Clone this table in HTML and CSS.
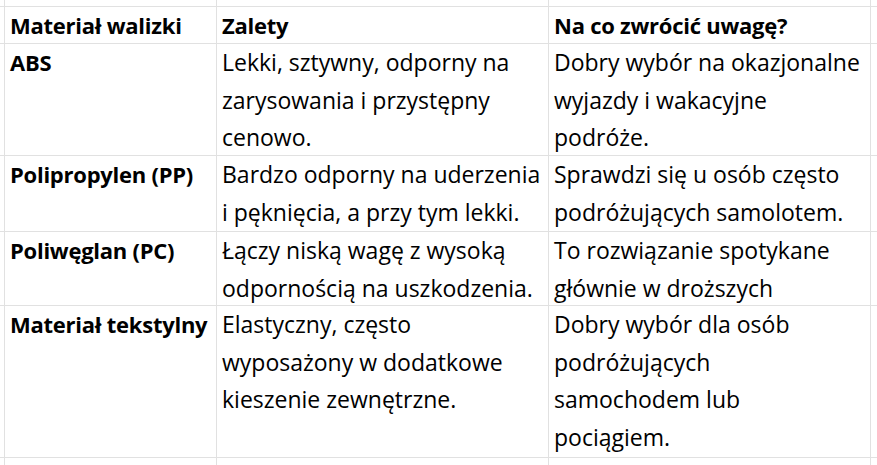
FILE: index.html
```html
<!DOCTYPE html>
<html lang="pl">
<head>
<meta charset="utf-8">
<title>Materiały walizek</title>
<link rel="stylesheet" href="styles.css">
</head>
<body>
<div class="sheet">
  <div class="gap"></div><div class="gap"></div><div class="gap"></div><div class="gap"></div><div class="gap"></div>

  <div class="gap"></div>
  <div class="cell head">Materiał walizki</div>
  <div class="cell head">Zalety</div>
  <div class="cell head">Na co zwrócić uwagę?</div>
  <div class="gap"></div>

  <div class="gap"></div>
  <div class="cell head">ABS</div>
  <div class="cell">Lekki, sztywny, odporny na<br>zarysowania i przystępny<br>cenowo.</div>
  <div class="cell">Dobry wybór na okazjonalne<br>wyjazdy i wakacyjne<br>podróże.</div>
  <div class="gap"></div>

  <div class="gap"></div>
  <div class="cell head">Polipropylen (PP)</div>
  <div class="cell">Bardzo odporny na uderzenia<br>i pęknięcia, a przy tym lekki.</div>
  <div class="cell">Sprawdzi się u osób często<br>podróżujących samolotem.</div>
  <div class="gap"></div>

  <div class="gap"></div>
  <div class="cell head">Poliwęglan (PC)</div>
  <div class="cell">Łączy niską wagę z wysoką<br>odpornością na uszkodzenia.</div>
  <div class="cell">To rozwiązanie spotykane<br>głównie w droższych</div>
  <div class="gap"></div>

  <div class="gap"></div>
  <div class="cell head">Materiał tekstylny</div>
  <div class="cell">Elastyczny, często<br>wyposażony w dodatkowe<br>kieszenie zewnętrzne.</div>
  <div class="cell">Dobry wybór dla osób<br>podróżujących<br>samochodem lub<br>pociągiem.</div>
  <div class="gap"></div>

  <div class="gap"></div><div class="gap"></div><div class="gap"></div><div class="gap"></div><div class="gap"></div>
</div>
</body>
</html>
```

FILE: styles.css
```css
html, body {
  margin: 0;
  padding: 0;
  background: #ffffff;
}

.sheet {
  display: grid;
  grid-template-columns: 4px 211px 331px 321px 1fr;
  grid-template-rows: 6px 36px 111px 75px 73px 151px 1fr;
  gap: 1px;
  background: #e1e1e1;
  width: 877px;
  height: 465px;
  overflow: hidden;
  font-family: "Open Sans", "Noto Sans", sans-serif;
  font-size: 23px;
  color: #000000;
}

.gap {
  background: #ffffff;
}

.cell {
  background: #ffffff;
  padding: 0 2px 0 5px;
  line-height: 37.5px;
  white-space: nowrap;
  overflow: hidden;
}

.head {
  font-weight: 700;
  font-size: 22px;
  letter-spacing: -0.25px;
}
```
